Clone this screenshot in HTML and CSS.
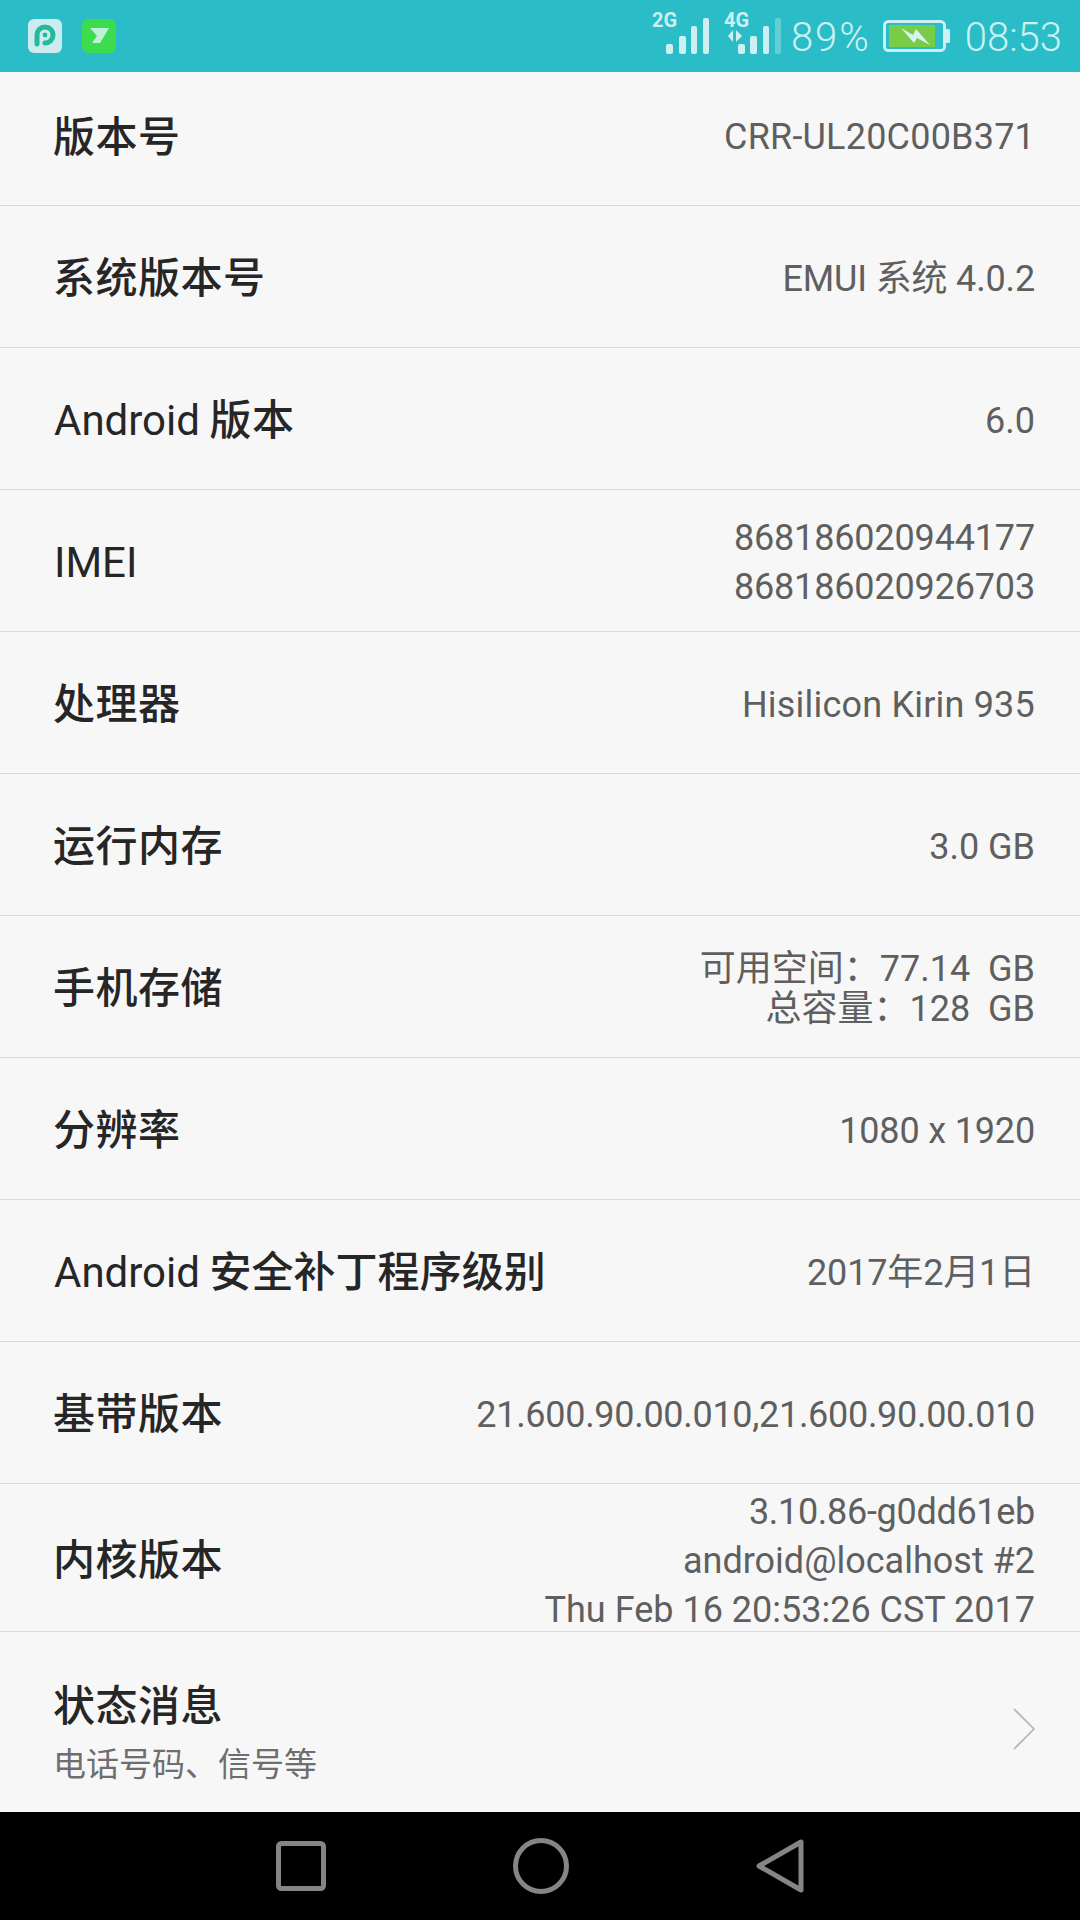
FILE: index.html
```html
<!DOCTYPE html>
<html lang="zh-CN">
<head>
<meta charset="utf-8">
<title>关于手机</title>
<link rel="stylesheet" href="styles.css">
</head>
<body>
<div class="phone">
  <header class="statusbar">
    <div class="apps">
      <svg class="app" viewBox="0 0 34 34"><rect width="34" height="34" rx="6" fill="#cdebee"/><path d="M9 25V16a8 8 0 1 1 8 8" fill="none" stroke="#25b99a" stroke-width="5" stroke-linecap="round"/><circle cx="17" cy="16" r="2.4" fill="#25b99a"/></svg>
      <svg class="app" viewBox="0 0 34 34"><rect width="34" height="34" rx="6" fill="#3ddc4e"/><path d="M8 9H27L18 24H10L15 17Z" fill="#bff0d8"/></svg>
    </div>
    <div class="indicators">
      <svg class="signal" viewBox="0 -6 60 50"><text x="1" y="15" class="net">2G</text><rect x="15" y="32" width="7" height="10" rx="2"/><rect x="28" y="24" width="7" height="18" rx="2"/><rect x="40" y="14" width="6" height="28" rx="2"/><rect x="52" y="6" width="6" height="36" rx="2"/></svg>
      <svg class="signal" viewBox="0 -6 60 50"><text x="1" y="15" class="net">4G</text><path d="M5 24 10 18V30ZM13 18 19 24 13 30Z"/><rect x="15" y="32" width="7" height="10" rx="2"/><rect x="27" y="24" width="7" height="18" rx="2"/><rect x="40" y="14" width="6" height="28" rx="2"/><rect x="52" y="6" width="6" height="36" rx="2" opacity=".35"/></svg>
      <span class="stat pct">89%</span>
      <svg class="battery" viewBox="0 0 67 32"><rect x="1.5" y="1.5" width="60" height="29" rx="4" fill="none" stroke="#cdf0f2" stroke-width="3"/><rect x="6" y="5" width="46" height="22" fill="#78cc48"/><rect x="62" y="9" width="5" height="14" rx="1.5" fill="#cdf0f2"/><path d="M18 8 30 15 33 9 47 25 34 18 31 23Z" fill="#daf3f0"/></svg>
      <span class="stat">08:53</span>
    </div>
  </header>

  <main class="list">
    <div class="row first"><span class="label"><span class="cjk">版本号</span></span><span class="value wide">CRR-UL20C00B371</span></div>
    <div class="row"><span class="label"><span class="cjk">系统版本号</span></span><span class="value digits">EMUI 系统 4.0.2</span></div>
    <div class="row"><span class="label">Android <span class="cjk">版本</span></span><span class="value">6.0</span></div>
    <div class="row"><span class="label">IMEI</span><span class="value digits">868186020944177<br>868186020926703</span></div>
    <div class="row"><span class="label"><span class="cjk">处理器</span></span><span class="value wide">Hisilicon Kirin 935</span></div>
    <div class="row"><span class="label"><span class="cjk">运行内存</span></span><span class="value">3.0 GB</span></div>
    <div class="row"><span class="label"><span class="cjk">手机存储</span></span><span class="value tight">可用空间：77.14&nbsp; GB<br>总容量：128&nbsp; GB</span></div>
    <div class="row"><span class="label"><span class="cjk">分辨率</span></span><span class="value digits">1080 x 1920</span></div>
    <div class="row"><span class="label">Android <span class="cjk long">安全补丁程序级别</span></span><span class="value digits">2017年2月1日</span></div>
    <div class="row"><span class="label"><span class="cjk">基带版本</span></span><span class="value narrow">21.600.90.00.010,21.600.90.00.010</span></div>
    <div class="row kernel"><span class="label"><span class="cjk">内核版本</span></span><span class="value"><span class="narrow">3.10.86-g0dd61eb</span><br>android@localhost #2<br>Thu Feb 16 20:53:26 CST 2017</span></div>
    <div class="row status">
      <div class="stack"><span class="label"><span class="cjk">状态消息</span></span><span class="sub">电话号码、信号等</span></div>
      <svg class="chevron" viewBox="0 0 24 42"><path d="M2 1 22 21 2 41" fill="none" stroke="#b4b4b4" stroke-width="1.6"/></svg>
    </div>
  </main>

  <nav class="navbar">
    <svg class="nav-icon square" viewBox="0 0 50 50"><rect x="2.5" y="2.5" width="45" height="45" rx="3" fill="none" stroke="#858585" stroke-width="5"/></svg>
    <svg class="nav-icon circle" viewBox="0 0 56 56"><circle cx="28" cy="28" r="25.5" fill="none" stroke="#858585" stroke-width="5"/></svg>
    <svg class="nav-icon triangle" viewBox="0 0 48 54"><path d="M45 3V51L3 27Z" fill="none" stroke="#858585" stroke-width="5" stroke-linejoin="round"/></svg>
  </nav>
</div>
</body>
</html>
```
FILE: styles.css
```css
* { box-sizing: border-box; }
html, body { margin: 0; padding: 0; }
body { background: #f7f7f7; font-family: Roboto, "Noto Sans CJK SC", sans-serif; }
.phone { width: 1080px; height: 1920px; display: flex; flex-direction: column; overflow: hidden; }

.statusbar { height: 72px; flex: none; background: #2abdc7; display: flex; justify-content: space-between; align-items: center; padding: 0 18px 0 28px; }
.apps { display: flex; gap: 20px; }
.app { width: 34px; height: 34px; display: block; }
.indicators { display: flex; align-items: center; color: #cdf0f2; }
.signal { width: 60px; height: 50px; fill: #cdf0f2; margin-top: -10px; display: block; }
.signal + .signal { margin-left: 12px; }
.net { font: 700 20px Roboto, sans-serif; }
.stat { font-size: 40px; font-weight: 300; line-height: 46px; padding-top: 4px; }
.pct { margin-left: 8px; letter-spacing: 2px; }
.battery { width: 67px; height: 32px; margin: 0 15px 0 12px; display: block; }

.list { flex: 1; display: flex; flex-direction: column; min-height: 0; }
.row { height: 142px; flex: none; display: flex; justify-content: space-between; align-items: center; padding: 5px 45px 0 54px; border-bottom: 1px solid #d8d8d8; }
.first { height: 134px; padding: 0 45px 2px 54px; }
.kernel { height: 148px; padding-top: 7px; }
.status { flex: 1; border-bottom: 0; padding: 24px 44px 0 54px; }
.label { color: #262626; font-size: 42px; line-height: 56px; white-space: nowrap; }
.cjk { font-weight: 500; letter-spacing: 0.5px; margin-left: -1px; }
.long { letter-spacing: 0.05px; }
.value { color: #5f5f5f; font-size: 36px; line-height: 49px; text-align: right; white-space: nowrap; }
.tight { line-height: 40.5px; }
.wide { letter-spacing: 0.2px; }
.digits { letter-spacing: -0.16px; }
.narrow { letter-spacing: -0.3px; }
.stack { display: flex; flex-direction: column; }
.sub { color: #6e6e6e; font-size: 33px; line-height: 50px; margin: 5px 0 0 -1px; }
.chevron { width: 24px; height: 42px; display: block; margin-top: -11px; }

.navbar { height: 108px; flex: none; background: #000; display: flex; justify-content: center; align-items: center; gap: 187px; }
.nav-icon { display: block; }
.square { width: 50px; height: 50px; }
.circle { width: 56px; height: 56px; }
.triangle { width: 48px; height: 54px; }
```
